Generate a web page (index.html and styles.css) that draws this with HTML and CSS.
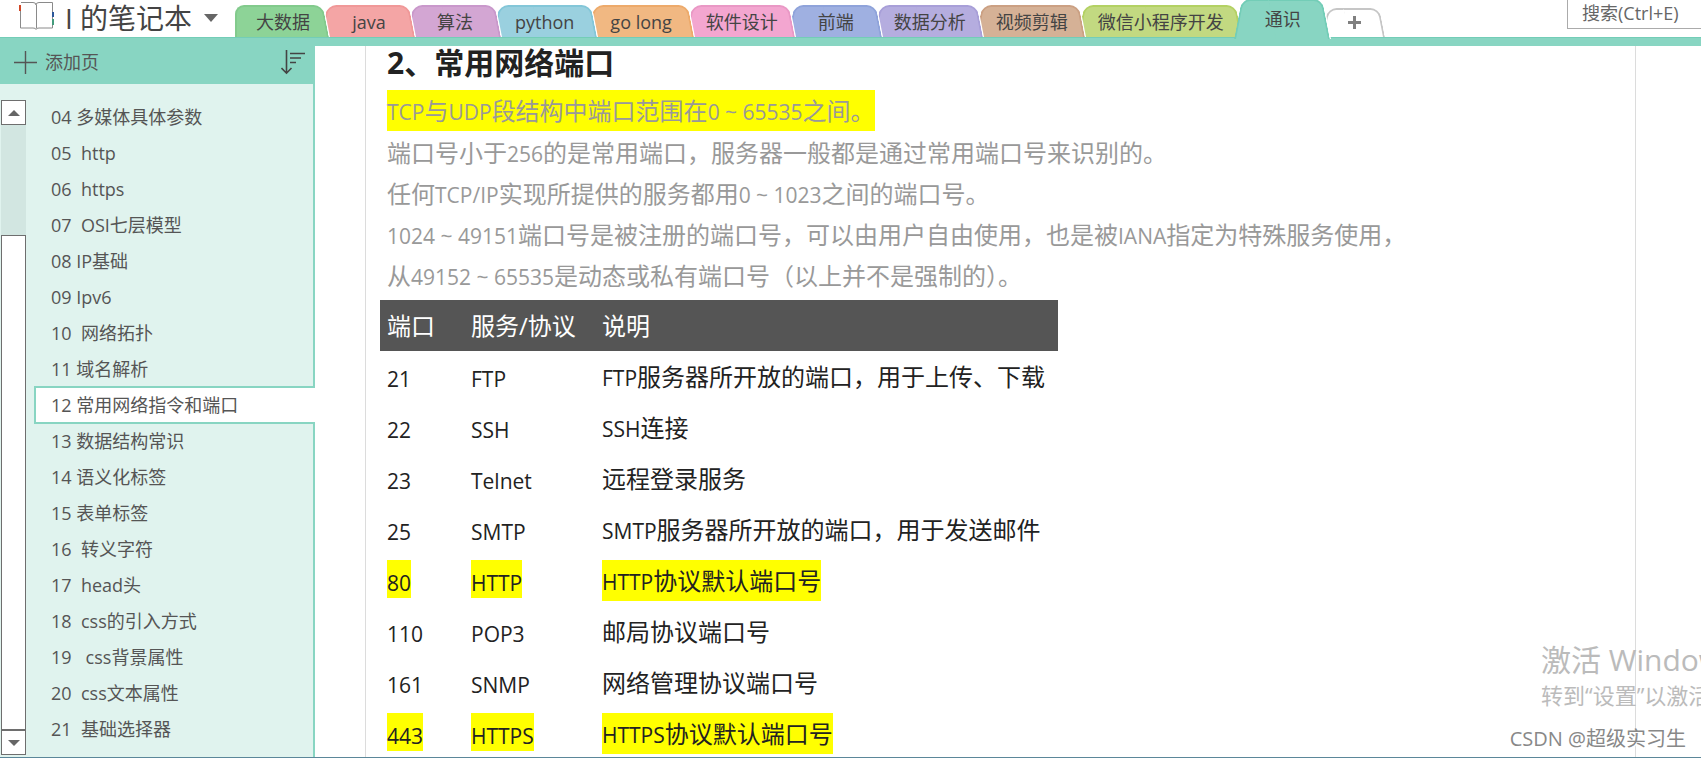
FILE: index.html
```html
<!DOCTYPE html>
<html lang="zh-CN">
<head>
  <meta charset="UTF-8">
  <title>I 的笔记本</title>
  <link rel="stylesheet" href="styles.css">
</head>
<body>
  <header class="topbar">
    <button class="notebook">
      <svg class="book-icon" width="36" height="31" viewBox="0 0 36 31" fill="none">
        <path d="M3 2.500H15Q18 2.500 18 5Q18 2.500 21 2.500H34.500V28H21Q18 28 18 29.500Q18 28 15 28H2.500V11M18.500 5V28" stroke="#8a8a8a"/>
        <path d="M2 5V11" stroke="#d24726" stroke-width="2"/>
        <path d="M35 12V17" stroke="#2b579a" stroke-width="2"/>
        <path d="M35 19V25" stroke="#439b7c" stroke-width="2"/>
      </svg>
      <span>I 的笔记本</span>
      <svg width="14" height="8" viewBox="0 0 14 8"><path d="M0 0H14L7 8Z" fill="#666"/></svg>
    </button>
    <nav class="tabs">
      <button class="tab green"><span>大数据</span></button>
      <button class="tab red"><span>java</span></button>
      <button class="tab purple"><span>算法</span></button>
      <button class="tab tab-mid cyan"><span>python</span></button>
      <button class="tab tab-mid orange"><span>go long</span></button>
      <button class="tab pink"><span>软件设计</span></button>
      <button class="tab blue"><span>前端</span></button>
      <button class="tab violet"><span>数据分析</span></button>
      <button class="tab brown"><span>视频剪辑</span></button>
      <button class="tab lime"><span>微信小程序开发</span></button>
      <button class="tab active"><span>通识</span></button>
      <button class="tab new-tab" aria-label="新建分区">
        <svg width="13" height="13" viewBox="0 0 13 13"><path d="M6.5 0V13M0 6.5H13" stroke="#808080" stroke-width="3"/></svg>
      </button>
    </nav>
    <input class="search" type="text" placeholder="搜索(Ctrl+E)" aria-label="搜索">
  </header>

  <div class="workspace">
    <aside class="sidebar">
      <div class="sidebar-head">
        <button class="add-page">
          <svg width="23" height="23" viewBox="0 0 23 23"><path d="M11.5 0V23M0 11.5H23" stroke="#555" stroke-width="1.4"/></svg>
          <span>添加页</span>
        </button>
        <button class="sort" aria-label="排序">
          <svg width="25" height="25" viewBox="0 0 25 25" fill="none" stroke="#444" stroke-width="1.6"><path d="M5.500 0V23M0.500 18L5.500 23.200L10.500 18M9 3.500H24M9 8H20M9 12.500H15"/></svg>
        </button>
      </div>
      <div class="sidebar-body">
        <div class="scrollbar">
          <button class="scroll-btn" aria-label="向上"><svg width="12" height="6" viewBox="0 0 12 6"><path d="M0 6H12L6 0Z" fill="#666"/></svg></button>
          <div class="track"></div>
          <div class="thumb"></div>
          <button class="scroll-btn" aria-label="向下"><svg width="12" height="6" viewBox="0 0 12 6"><path d="M0 0H12L6 6Z" fill="#666"/></svg></button>
        </div>
        <nav class="pages">
          <a href="#">04 多媒体具体参数</a>
          <a href="#">05  http</a>
          <a href="#">06  https</a>
          <a href="#">07  OSI七层模型</a>
          <a href="#">08 IP基础</a>
          <a href="#">09 Ipv6</a>
          <a href="#">10  网络拓扑</a>
          <a href="#">11 域名解析</a>
          <a href="#" class="current">12 常用网络指令和端口</a>
          <a href="#">13 数据结构常识</a>
          <a href="#">14 语义化标签</a>
          <a href="#">15 表单标签</a>
          <a href="#">16  转义字符</a>
          <a href="#">17  head头</a>
          <a href="#">18  css的引入方式</a>
          <a href="#">19   css背景属性</a>
          <a href="#">20  css文本属性</a>
          <a href="#">21  基础选择器</a>
        </nav>
      </div>
    </aside>

    <main class="note">
      <h2>2、常用网络端口</h2>
      <p class="mark"><span class="en">TCP</span>与<span class="en">UDP</span>段结构中端口范围在<span class="en">0 ~ 65535</span>之间。</p>
      <p>端口号小于<span class="en">256</span>的是常用端口，服务器一般都是通过常用端口号来识别的。</p>
      <p>任何<span class="en">TCP/IP</span>实现所提供的服务都用<span class="en">0 ~ 1023</span>之间的端口号。</p>
      <p><span class="en">1024 ~ 49151</span>端口号是被注册的端口号，可以由用户自由使用，也是被<span class="en">IANA</span>指定为特殊服务使用，</p>
      <p>从<span class="en">49152 ~ 65535</span>是动态或私有端口号（以上并不是强制的）。</p>
      <table class="ports">
        <thead>
          <tr><th>端口</th><th>服务/协议</th><th>说明</th></tr>
        </thead>
        <tbody>
          <tr><td><span class="code">21</span></td><td><span class="code">FTP</span></td><td><span class="desc"><span class="en">FTP</span>服务器所开放的端口，用于上传、下载</span></td></tr>
          <tr><td><span class="code">22</span></td><td><span class="code">SSH</span></td><td><span class="desc"><span class="en">SSH</span>连接</span></td></tr>
          <tr><td><span class="code">23</span></td><td><span class="code">Telnet</span></td><td><span class="desc">远程登录服务</span></td></tr>
          <tr><td><span class="code">25</span></td><td><span class="code">SMTP</span></td><td><span class="desc"><span class="en">SMTP</span>服务器所开放的端口，用于发送邮件</span></td></tr>
          <tr><td><span class="code mark">80</span></td><td><span class="code mark">HTTP</span></td><td><span class="desc mark"><span class="en">HTTP</span>协议默认端口号</span></td></tr>
          <tr><td><span class="code">110</span></td><td><span class="code">POP3</span></td><td><span class="desc">邮局协议端口号</span></td></tr>
          <tr><td><span class="code">161</span></td><td><span class="code">SNMP</span></td><td><span class="desc">网络管理协议端口号</span></td></tr>
          <tr><td><span class="code mark">443</span></td><td><span class="code mark">HTTPS</span></td><td><span class="desc mark"><span class="en">HTTPS</span>协议默认端口号</span></td></tr>
        </tbody>
      </table>
    </main>
  </div>

  <div class="activate">
    <div class="activate-title">激活 Windows</div>
    <div class="activate-text">转到“设置”以激活 Windows。</div>
  </div>
  <div class="credit">CSDN @超级实习生</div>
</body>
</html>
```

FILE: styles.css
```css
* {
  box-sizing: border-box;
}

body {
  margin: 0;
  height: 100vh;
  display: flex;
  flex-direction: column;
  position: relative;
  overflow: hidden;
  border-bottom: 1px solid #5b8799;
  background-color: #fff;
  color: #444;
  font-family: "Open Sans", "Noto Sans CJK SC", sans-serif;
  font-size: 18px;
}

button {
  padding: 0;
  border: none;
  background: none;
  color: inherit;
  font: inherit;
  cursor: pointer;
}

svg {
  display: block;
}

/* top bar */
.topbar {
  display: flex;
  height: 46px;
  flex-shrink: 0;
  border-bottom: 8px solid #88d5c2;
  box-shadow: inset 0 -1px 0 #73cdb7;
}

.notebook {
  display: flex;
  align-items: center;
  width: 235px;
  height: 36px;
  padding-left: 18px;
  font-size: 28px;
  line-height: 36px;
  white-space: nowrap;
}

.notebook span {
  margin: 0 12px 0 11px;
}

.book-icon {
  align-self: flex-start;
}

.tabs {
  display: flex;
  align-items: flex-end;
  flex: 1;
  padding: 0 0 1px 8px;
}

.tab {
  --fill: #fff;
  --edge: #c6c6c6;
  position: relative;
  height: 32px;
  min-width: 94px;
  margin-left: -8px;
  padding: 0 18px 0 20px;
  line-height: 34px;
  white-space: nowrap;
}

.tab-mid {
  padding: 0 22px;
}

/* each half of the tab leans inwards */
.tab::before,
.tab::after {
  content: "";
  position: absolute;
  top: 0;
  bottom: 0;
  background-color: var(--fill);
  border-top: 2px solid var(--edge);
  transform-origin: bottom;
}

.tab::before {
  left: 0;
  width: 50%;
  border-left: 2px solid var(--edge);
  border-radius: 9px 0 0 0;
  transform: skewX(-11deg);
}

.tab::after {
  right: 0;
  width: 54%;
  border-right: 2px solid var(--edge);
  border-radius: 0 9px 0 0;
  box-shadow: 1px 0 0 #fff;
  transform: skewX(11deg);
}

.tab:first-child::before {
  transform: none;
}

.tab span,
.tab svg {
  position: relative;
  z-index: 1;
}

.tab:nth-child(1) { z-index: 11; }
.tab:nth-child(2) { z-index: 10; }
.tab:nth-child(3) { z-index: 9; }
.tab:nth-child(4) { z-index: 8; }
.tab:nth-child(5) { z-index: 7; }
.tab:nth-child(6) { z-index: 6; }
.tab:nth-child(7) { z-index: 5; }
.tab:nth-child(8) { z-index: 4; }
.tab:nth-child(9) { z-index: 3; }
.tab:nth-child(10) { z-index: 2; }

.green { --fill: #8dd397; --edge: #82ca8c; }
.red { --fill: #f4a5a5; --edge: #f09898; }
.purple { --fill: #d3a6d3; --edge: #c998cb; }
.cyan { --fill: #9ad0df; --edge: #83c6d8; }
.orange { --fill: #f1b882; --edge: #edaa6b; }
.pink { --fill: #f3a6d0; --edge: #e998c5; }
.blue { --fill: #9fb0e1; --edge: #8fa3da; }
.violet { --fill: #b5addf; --edge: #a89fd8; }
.brown { --fill: #d5b196; --edge: #cba083; }
.lime { --fill: #c2d981; --edge: #b3d163; }

.tab.active {
  --fill: #88d5c2;
  --edge: #73cdb7;
  z-index: 20;
  height: 40px;
  min-width: 96px;
  margin-bottom: -2px;
  line-height: 38px;
}

.tab.new-tab {
  z-index: 1;
  height: 29px;
  min-width: 63px;
  padding: 0 0 0 26px;
}

.search {
  width: 134px;
  height: 29px;
  padding: 0 0 2px 14px;
  border: 1px solid #ababab;
  border-width: 0 0 1px 1px;
  outline: none;
  background-color: #fff;
  color: #666;
  font: inherit;
}

.search::placeholder {
  color: #666;
  opacity: 1;
}

/* page list */
.workspace {
  display: flex;
  flex: 1;
  min-height: 0;
}

.sidebar {
  display: flex;
  flex-direction: column;
  width: 315px;
  flex-shrink: 0;
}

.sidebar-head {
  display: flex;
  align-items: center;
  justify-content: space-between;
  height: 38px;
  padding: 0 9px 6px 14px;
  background-color: #88d5c2;
  color: #555;
}

.add-page {
  display: flex;
  align-items: center;
  gap: 8px;
  line-height: 32px;
}

.sidebar-body {
  display: flex;
  flex: 1;
  min-height: 0;
  padding-left: 1px;
  background-color: #e0f3ee;
}

.scrollbar {
  display: flex;
  flex-direction: column;
  width: 25px;
  padding: 16px 0 2px;
}

.scroll-btn {
  display: flex;
  align-items: center;
  justify-content: center;
  height: 25px;
  border: 1px solid #6e6e6e;
  background-color: #fff;
}

.track {
  flex: 111;
  background-color: #d2e6e1;
}

.thumb {
  flex: 495;
  border: 1px solid #6e6e6e;
  background-color: #fff;
}

.pages {
  display: flex;
  flex-direction: column;
  flex: 1;
  padding: 15px 0 0 8px;
  border-right: 2px solid #88d5c2;
}

.pages a {
  flex-shrink: 0;
  padding-left: 17px;
  line-height: 36px;
  color: #555;
  text-decoration: none;
  white-space: pre;
}

.pages .current {
  margin: -1px -2px -1px 0;
  padding-left: 15px;
  border: 2px solid #88d5c2;
  border-right: none;
  background-color: #fff;
  line-height: 34px;
}

/* note page */
.note {
  flex: 1;
  margin: 0 65px 0 50px;
  padding-left: 21px;
  border: 1px solid #dcdcdc;
  border-width: 0 1px;
  color: #999;
  font-size: 24px;
}

.note h2 {
  margin: 0 0 10px;
  color: #222;
  font-size: 30px;
  line-height: 34px;
}

.note p {
  width: fit-content;
  margin: 0;
  line-height: 41px;
}

.note p.mark {
  margin-bottom: 1px;
}

.en {
  font-size: 21px;
  line-height: 1;
}

.note .mark {
  background-color: #ff0;
}

.ports {
  margin: 4px 0 0 -7px;
  border-collapse: collapse;
  color: #222;
}

.ports th {
  padding: 5px 7px;
  background-color: #555;
  color: #fff;
  font-weight: normal;
  line-height: 41px;
  text-align: left;
}

.ports td {
  padding: 5px 7px;
  vertical-align: top;
}

.ports th:nth-child(1) {
  width: 84px;
}

.ports th:nth-child(2) {
  width: 131px;
}

.ports th:nth-child(3) {
  width: 463px;
}

.code,
.desc {
  display: block;
  width: fit-content;
}

.code {
  padding-top: 8px;
  font-size: 21px;
  line-height: 30px;
}

.desc {
  line-height: 41px;
}

/* desktop overlays */
.activate {
  position: absolute;
  left: calc(100% - 160px);
  bottom: 46px;
  color: #bbb;
  white-space: nowrap;
}

.activate-title {
  font-size: 30px;
  line-height: 38px;
}

.activate-text {
  font-size: 22px;
  line-height: 32px;
}

.credit {
  position: absolute;
  right: 15px;
  bottom: 3px;
  color: #888;
  font-size: 20px;
  line-height: 30px;
  text-shadow: 1px 1px 0 #fff;
}
```
